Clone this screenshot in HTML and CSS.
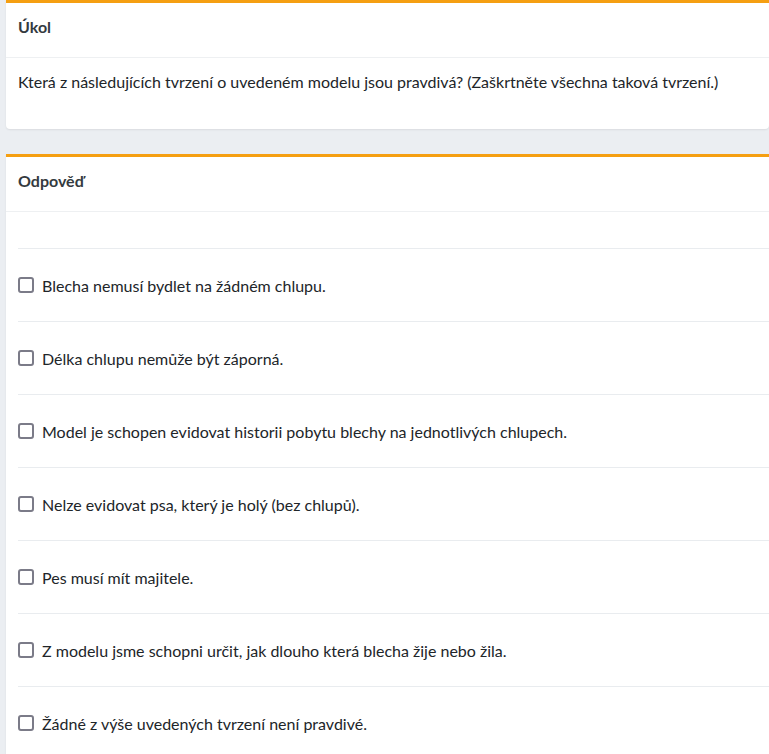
FILE: index.html
```html
<!DOCTYPE html>
<html lang="cs">
<head>
<meta charset="utf-8">
<link rel="stylesheet" href="styles.css">
</head>
<body>
<div class="page">
  <section class="card">
    <div class="card-header">Úkol</div>
    <div class="card-body task">Která z následujících tvrzení o uvedeném modelu jsou pravdivá? (Zaškrtněte všechna taková tvrzení.)</div>
  </section>
  <section class="card">
    <div class="card-header">Odpověď</div>
    <div class="answers">
      <label class="option"><span class="box"></span>Blecha nemusí bydlet na žádném chlupu.</label>
      <label class="option"><span class="box"></span>Délka chlupu nemůže být záporná.</label>
      <label class="option"><span class="box"></span>Model je schopen evidovat historii pobytu blechy na jednotlivých chlupech.</label>
      <label class="option"><span class="box"></span>Nelze evidovat psa, který je holý (bez chlupů).</label>
      <label class="option"><span class="box"></span>Pes musí mít majitele.</label>
      <label class="option"><span class="box"></span>Z modelu jsme schopni určit, jak dlouho která blecha žije nebo žila.</label>
      <label class="option"><span class="box"></span>Žádné z výše uvedených tvrzení není pravdivé.</label>
    </div>
  </section>
</div>
</body>
</html>
```

FILE: styles.css
```css
html, body {
  margin: 0;
  padding: 0;
  background: #ebeef2;
  overflow: hidden;
}
body {
  font-family: Lato, "Open Sans", sans-serif;
  font-size: 16px;
  color: #212529;
}
.page {
  padding-left: 6px;
  display: flex;
  flex-direction: column;
  gap: 25px;
}
.card {
  background: #fff;
  border-top: 3px solid #f59f12;
  border-radius: 0 0 4px 4px;
  box-shadow: 0 1px 2px rgba(0,0,0,0.08);
}
.card-header {
  height: 55px;
  box-sizing: border-box;
  padding: 12px 12px 0;
  line-height: 24px;
  font-weight: 700;
  color: #343a40;
  border-bottom: 1px solid #eef0f2;
}
.task {
  padding: 14px 12px 37px;
  line-height: 20px;
}
.answers {
  padding: 36px 0 0 12px;
}
.option {
  display: flex;
  align-items: center;
  height: 73px;
  box-sizing: border-box;
  border-top: 1px solid #e9ecef;
  gap: 8px;
}
.box {
  width: 12px;
  height: 12px;
  border: 2px solid #7b7b88;
  border-radius: 3px;
  flex: none;
}
```
